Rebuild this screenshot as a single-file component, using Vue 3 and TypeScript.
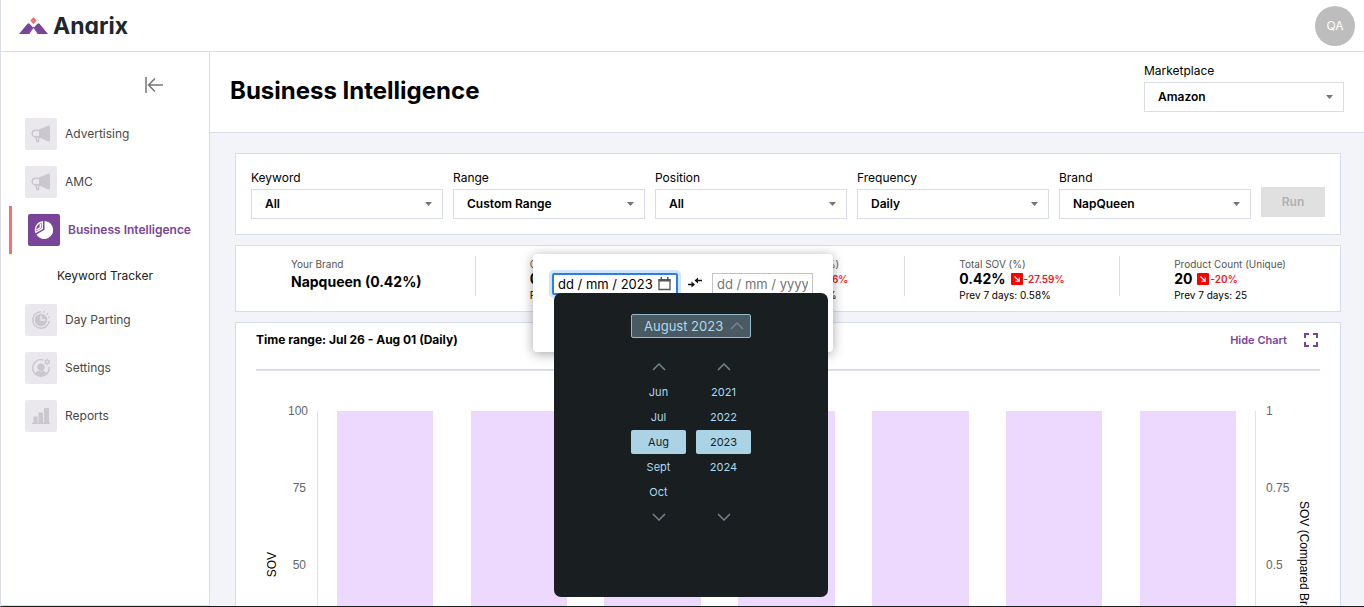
<script setup lang="ts">
import { ref } from 'vue'

interface NavItem {
  label: string
  icon: 'horn' | 'pie' | 'clock' | 'user' | 'bars'
  active?: boolean
  children?: string[]
}

interface Filter {
  id: string
  label: string
  value: string
}

interface Stat {
  label: string
  value: string
  change?: string
  prev?: string
}

const nav: NavItem[] = [
  { label: 'Advertising', icon: 'horn' },
  { label: 'AMC', icon: 'horn' },
  { label: 'Business Intelligence', icon: 'pie', active: true, children: ['Keyword Tracker'] },
  { label: 'Day Parting', icon: 'clock' },
  { label: 'Settings', icon: 'user' },
  { label: 'Reports', icon: 'bars' },
]

const filters: Filter[] = [
  { id: 'keyword', label: 'Keyword', value: 'All' },
  { id: 'range', label: 'Range', value: 'Custom Range' },
  { id: 'position', label: 'Position', value: 'All' },
  { id: 'frequency', label: 'Frequency', value: 'Daily' },
  { id: 'brand', label: 'Brand', value: 'NapQueen' },
]

const stats: Stat[] = [
  { label: 'Your Brand', value: 'Napqueen (0.42%)' },
  { label: 'Organic SOV (%)', value: '0.08%', change: '-20%', prev: 'Prev 7 days: 0.10%' },
  { label: 'Sponsored SOV (%)', value: '0.34%', change: '-29.16%', prev: 'Prev 7 days: 0.48%' },
  { label: 'Total SOV (%)', value: '0.42%', change: '-27.59%', prev: 'Prev 7 days: 0.58%' },
  { label: 'Product Count (Unique)', value: '20', change: '-20%', prev: 'Prev 7 days: 25' },
]

const leftTicks = ['100', '75', '50', '25', '0']
const rightTicks = ['1', '0.75', '0.5', '0.25', '0']
const bars = [100, 100, 100, 100, 100, 100, 100]

const months = ['Jun', 'Jul', 'Aug', 'Sept', 'Oct']
const years = ['2021', '2022', '2023', '2024']
const month = ref('Aug')
const year = ref('2023')
const startDate = ref('dd / mm / 2023')
const endDate = ref('')
</script>

<template>
  <div class="app">
    <header class="topbar">
      <a class="brand" href="#">
        <svg width="29" height="18" viewBox="0 0 29 18" aria-hidden="true">
          <path d="M0 17 8.500 6.800q1-1 2 0L14 10.500 8.800 17zM29 17 20.500 6.800q-1-1-2 0L15 10.500 20.200 17z" fill="#7a449b" />
          <path d="M8.500 17 14.500 9.500 20.500 17h-5L14.500 11.500 13.500 17z" fill="#7a449b" />
          <path d="M10.300 17 14.500 11 18.700 17z" fill="#fff" />
          <path d="m14.500 0 3.200 3.600-3.200 3.600-3.200-3.600z" fill="#f46f76" />
        </svg>
        <span class="brand-name">Anarix</span>
      </a>
      <button class="avatar" type="button">QA</button>
    </header>

    <div class="body">
      <aside class="sidebar">
        <button class="collapse" type="button" aria-label="Collapse menu">
          <svg width="18" height="18" viewBox="0 0 18 18" fill="none" stroke="#757575" stroke-width="1.500">
            <path d="M1 1v16M18 9H4M10 2.500 3.500 9l6.500 6.500" />
          </svg>
        </button>
        <nav>
          <template v-for="item in nav" :key="item.label">
            <a class="nav-item" :class="{ active: item.active }" href="#">
              <span class="nav-icon">
                <svg v-if="item.icon === 'horn'" width="20" height="18" viewBox="0 0 20 18">
                  <path d="M8 4.500 17.500.5Q19 0 19 1.800v13.400q0 1.800-1.500 1.300L8 12.500z" fill="#cbc7cf" />
                  <path d="M8.500 5.200H4.500a3.300 3.300 0 0 0 0 6.600h4M4.800 12l.8 4q1.200 1.300 2 0v-4" fill="none" stroke="#cbc7cf" stroke-width="1.500" />
                </svg>
                <svg v-else-if="item.icon === 'pie'" width="20" height="20" viewBox="0 0 20 20">
                  <path d="M10.500 1A9 9 0 1 1 2.400 14.600L10.500 9.800z" fill="#fff" />
                  <path d="M8.300 1.900v6.700L1.900 12.300A8 8 0 0 1 8.300 1.900zM6.300 3.500v4.200L2.500 10" fill="none" stroke="#fff" stroke-width="1.400" />
                </svg>
                <svg v-else-if="item.icon === 'clock'" width="20" height="20" viewBox="0 0 20 20">
                  <circle cx="10" cy="10" r="6.300" fill="#cbc7cf" />
                  <path d="M10 5.500V10h4.500" fill="none" stroke="#ebe8ed" stroke-width="1.500" />
                  <path d="M10 1.700A8.300 8.300 0 1 0 18.300 11" fill="none" stroke="#cbc7cf" stroke-width="1.500" />
                  <path d="M12.200 1.900h1.500M15.600 4h1.500M17.300 7.200h1.500" stroke="#cbc7cf" stroke-width="1.600" />
                </svg>
                <svg v-else-if="item.icon === 'user'" width="20" height="20" viewBox="0 0 20 20">
                  <circle cx="10" cy="9.200" r="3.700" fill="#cbc7cf" />
                  <path d="M4 15.500q1.500-3 4-2.500 2 .8 4 0 2.500-.5 4 2.500a8 8 0 0 1-12 0z" fill="#cbc7cf" />
                  <path d="M12 1.900A8.300 8.300 0 1 0 18.200 9" fill="none" stroke="#cbc7cf" stroke-width="1.500" />
                  <circle cx="16.200" cy="3.800" r="1.700" fill="none" stroke="#cbc7cf" stroke-width="1.400" />
                  <path d="M16.200.8v1.400M16.200 5.400v1.400M13.600 2.300l1.200.7M17.600 4.600l1.200.7M13.600 5.300l1.200-.7M17.600 3l1.200-.7" stroke="#cbc7cf" stroke-width="1.400" />
                </svg>
                <svg v-else width="20" height="18" viewBox="0 0 20 18" fill="#cbc7cf">
                  <path d="M1 15.500h18V17H1zM2.500 9.500h4v6h-4zM7.500 5.500h4.500v10H7.500zM13 1h5v14.500h-5z" />
                </svg>
              </span>
              {{ item.label }}
            </a>
            <a v-for="child in item.children" :key="child" class="nav-child" href="#">{{ child }}</a>
          </template>
        </nav>
      </aside>

      <main class="main">
        <div class="page-head">
          <h1>Business Intelligence</h1>
          <div class="field marketplace">
            <label for="marketplace">Marketplace</label>
            <div class="select">
              <select id="marketplace">
                <option>Amazon</option>
              </select>
              <svg width="7" height="4" viewBox="0 0 7 4"><path d="M0 0h7L3.500 4z" fill="#757575" /></svg>
            </div>
          </div>
        </div>

        <div class="content">
          <form class="card filters" @submit.prevent>
            <div v-for="f in filters" :key="f.id" class="field">
              <label :for="f.id">{{ f.label }}</label>
              <div class="select">
                <select :id="f.id">
                  <option>{{ f.value }}</option>
                </select>
                <svg width="7" height="4" viewBox="0 0 7 4"><path d="M0 0h7L3.500 4z" fill="#757575" /></svg>
              </div>

              <div v-if="f.id === 'range'" class="popup">
                <div class="dates">
                  <div class="date focused">
                    <input v-model="startDate" type="text" aria-label="Start date" />
                    <button type="button" aria-label="Open calendar">
                      <svg width="13" height="14" viewBox="0 0 13 14">
                        <path d="M1 3h11v9.500H1z" fill="none" stroke="#555" stroke-width="1.300" />
                        <path d="M.5 2h12v2.500H.5zM2.500 0H4v3H2.500zM9 0h1.500v3H9z" fill="#555" />
                      </svg>
                    </button>
                  </div>
                  <svg class="swap" width="14" height="16" viewBox="0 0 14 16">
                    <path d="M0 8.500h4M9.500 4.500H14" stroke="#111" stroke-width="1.400" />
                    <path d="m3.500 5.500 3.500 3-3.500 3zM10 1.500 6.500 4.500l3.500 3z" fill="#111" />
                  </svg>
                  <div class="date">
                    <input v-model="endDate" type="text" placeholder="dd / mm / yyyy" aria-label="End date" />
                  </div>
                </div>

                <div class="calendar">
                  <button class="cal-head" type="button">
                    August 2023
                    <svg width="14" height="8" viewBox="0 0 14 8"><path d="m1 7 6-6 6 6" /></svg>
                  </button>
                  <div class="cal-cols">
                    <div class="cal-col">
                      <button type="button" aria-label="Previous months">
                        <svg width="14" height="8" viewBox="0 0 14 8"><path d="m1 7 6-6 6 6" /></svg>
                      </button>
                      <button v-for="m in months" :key="m" type="button" :class="{ picked: m === month }" @click="month = m">{{ m }}</button>
                      <button type="button" aria-label="Next months">
                        <svg width="14" height="8" viewBox="0 0 14 8"><path d="m1 1 6 6 6-6" /></svg>
                      </button>
                    </div>
                    <div class="cal-col">
                      <button type="button" aria-label="Previous years">
                        <svg width="14" height="8" viewBox="0 0 14 8"><path d="m1 7 6-6 6 6" /></svg>
                      </button>
                      <button v-for="y in years" :key="y" type="button" :class="{ picked: y === year }" @click="year = y">{{ y }}</button>
                      <button class="last" type="button" aria-label="Next years">
                        <svg width="14" height="8" viewBox="0 0 14 8"><path d="m1 1 6 6 6-6" /></svg>
                      </button>
                    </div>
                  </div>
                </div>
              </div>
            </div>
            <button class="run" type="submit" disabled>Run</button>
          </form>

          <section class="card stats">
            <div v-for="s in stats" :key="s.label" class="stat">
              <div class="stat-label">{{ s.label }}</div>
              <div class="stat-value" :class="{ solo: !s.prev }">
                {{ s.value }}
                <span v-if="s.change" class="change">
                  <svg width="12" height="12" viewBox="0 0 12 12">
                    <rect width="12" height="12" rx="1" fill="#f00" />
                    <path d="m3.500 3.500 4.500 4.500M8.300 4.500v3.800H4.500" fill="none" stroke="#fff" stroke-width="1.100" />
                  </svg>
                  {{ s.change }}
                </span>
              </div>
              <div v-if="s.prev" class="stat-prev">{{ s.prev }}</div>
            </div>
          </section>

          <section class="card chart-card">
            <div class="chart-head">
              <h2>Time range: Jul 26 - Aug 01 (Daily)</h2>
              <button class="hide" type="button">Hide Chart</button>
              <button class="full" type="button" aria-label="Full screen">
                <svg width="14" height="14" viewBox="0 0 14 14" fill="none" stroke="#7a449b" stroke-width="2">
                  <path d="M1 5V1h4M9 1h4v4M13 9v4H9M5 13H1V9" />
                </svg>
              </button>
            </div>
            <div class="chart">
              <div class="axis-title"><span class="up">SOV</span></div>
              <div class="ticks left"><span v-for="t in leftTicks" :key="t">{{ t }}</span></div>
              <div class="plot">
                <div v-for="(b, i) in bars" :key="i" class="bar" :style="{ height: b + '%' }"></div>
              </div>
              <div class="ticks right"><span v-for="t in rightTicks" :key="t">{{ t }}</span></div>
              <div class="axis-title"><span>SOV (Compared Brand)</span></div>
            </div>
          </section>
        </div>
      </main>
    </div>
  </div>
</template>

<style>
body {
  margin: 0;
  overflow: hidden;
}
</style>

<style scoped>
* {
  box-sizing: border-box;
}

.app {
  display: flex;
  flex-direction: column;
  height: 100vh;
  overflow: hidden;
  border-left: 1px solid #d9dcea;
  border-bottom: 1px solid #191e21;
  background: #fff;
  color: #000;
  font-family: Inter, "Liberation Sans", sans-serif;
  font-size: 12px;
  line-height: 18px;
}

button,
input,
select {
  margin: 0;
  padding: 0;
  border: 0;
  background: none;
  color: inherit;
  font: inherit;
}

a {
  color: inherit;
  text-decoration: none;
}

svg {
  display: block;
  flex: none;
}

h1,
h2 {
  margin: 0;
}

.topbar {
  display: flex;
  flex: none;
  align-items: center;
  justify-content: space-between;
  height: 52px;
  padding: 0 9px 0 18px;
  border-bottom: 1px solid #d9dcea;
}

.brand {
  display: flex;
  align-items: center;
  gap: 5px;
}

.brand-name {
  color: #1d272e;
  font-size: 23px;
  font-weight: 700;
  line-height: 24px;
  font-feature-settings: "cv11";
}

.avatar {
  width: 40px;
  height: 40px;
  border-radius: 50%;
  background: #bdbdbd;
  color: #fff;
}

.body {
  display: flex;
  flex: 1;
  min-height: 0;
}

.sidebar {
  flex: none;
  width: 209px;
  border-right: 1px solid #d9dcea;
  border-bottom: 1px solid #d9dcea;
}

.collapse {
  display: block;
  margin: 24px 46px 16px auto;
}

.nav-item {
  display: flex;
  align-items: center;
  gap: 8px;
  height: 48px;
  margin-left: 8px;
  padding-left: 16px;
  color: #484848;
  line-height: 20px;
}

.nav-icon {
  display: grid;
  place-items: center;
  width: 32px;
  height: 32px;
  border-radius: 2px;
  background: #ebe8ed;
}

.nav-item.active {
  border-left: 3px solid #f46f76;
  color: #7a449b;
  font-weight: 600;
}

.active .nav-icon {
  background: #7a449b;
}

.nav-child {
  display: block;
  padding: 13px 0 11px 56px;
  color: #222;
}

.main {
  display: flex;
  flex: 1;
  flex-direction: column;
  min-width: 0;
  background: #f3f4fa;
}

.page-head {
  display: flex;
  flex: none;
  align-items: flex-start;
  justify-content: space-between;
  height: 81px;
  padding: 10px 20px 0;
  border-bottom: 1px solid #d9dcea;
  background: #fff;
}

h1 {
  padding-top: 14px;
  font-size: 24px;
  font-weight: 700;
  line-height: 30px;
}

.field {
  position: relative;
  display: flex;
  flex: 1;
  flex-direction: column;
  gap: 2px;
  min-width: 0;
}

.marketplace {
  flex: none;
  width: 200px;
}

.select {
  display: grid;
  align-items: center;
}

.select select {
  grid-area: 1 / 1;
  width: 100%;
  height: 30px;
  padding: 0 32px 0 13px;
  border: 1px solid #d9dcea;
  border-radius: 0;
  appearance: none;
  background: #fff;
  font-weight: 600;
}

.select svg {
  grid-area: 1 / 1;
  justify-self: end;
  margin-right: 11px;
  pointer-events: none;
}

.content {
  display: flex;
  flex: 1;
  flex-direction: column;
  gap: 10px;
  min-height: 0;
  padding: 20px 23px 0 25px;
}

.card {
  flex: none;
  border: 1px solid #d9dcea;
  background: #fff;
}

.filters {
  display: flex;
  align-items: flex-end;
  gap: 10px;
  padding: 15px;
}

.run {
  width: 64px;
  height: 30px;
  margin-bottom: 2px;
  background: #e0e0e0;
  color: #b0b0b0;
  font-weight: 600;
}

.stats {
  display: grid;
  grid-template-columns: 10fr 9fr 9fr 9fr 9fr;
  height: 67px;
  padding: 10px 5px 0 1px;
}

.stat {
  height: 40px;
  padding-left: 54px;
  border-right: 1px solid #d9dcea;
  white-space: nowrap;
}

.stat:last-child {
  border-right: 0;
}

.stat-label {
  padding-top: 1px;
  color: #555;
  font-size: 10px;
  line-height: 14px;
}

.stat-value {
  display: flex;
  align-items: center;
  gap: 5px;
  font-size: 14px;
  font-weight: 700;
  line-height: 16px;
}

.stat-value.solo {
  line-height: 22px;
}

.change {
  display: flex;
  align-items: center;
  gap: 1px;
  color: #f5121d;
  font-size: 10px;
  font-weight: 600;
}

.stat-prev {
  font-size: 10px;
  line-height: 16px;
}

.chart-card {
  padding: 0 20px 60px;
}

.chart-head {
  display: flex;
  align-items: center;
  height: 48px;
  padding: 0 2px 12px 0;
  border-bottom: 2px solid #d9dcea;
}

h2 {
  flex: 1;
  font-size: 12px;
  font-weight: 700;
}

.hide {
  margin-right: 17px;
  color: #7a449b;
  font-size: 11px;
  font-weight: 600;
}

.chart {
  display: grid;
  grid-template-columns: 32px 29px 1fr 32px 32px;
  height: 355px;
  padding-top: 33px;
  font-family: "Liberation Sans", Arial, sans-serif;
  line-height: 14px;
}

.axis-title {
  display: grid;
  place-items: center;
  margin: 7px 0;
  white-space: nowrap;
}

.axis-title span {
  writing-mode: vertical-rl;
}

.axis-title .up {
  transform: rotate(180deg);
}

.ticks {
  display: flex;
  flex-direction: column;
  justify-content: space-between;
  color: #666;
}

.left {
  padding-right: 11px;
  text-align: right;
}

.right {
  padding-left: 10px;
}

.plot {
  display: grid;
  grid-template-columns: repeat(7, 1fr);
  align-items: end;
  justify-items: center;
  margin: 7px 0;
  border: solid #e2e2e2;
  border-width: 0 1px;
}

.bar {
  width: 72%;
  background: #eed9fe;
}

.popup {
  position: absolute;
  top: 85px;
  left: 80px;
  z-index: 2;
  width: 300px;
  height: 98px;
  padding: 19px;
  border-radius: 4px;
  background: #fff;
  box-shadow: 0 2px 12px rgba(0, 0, 0, 0.35);
}

.dates {
  display: flex;
  align-items: center;
  gap: 10px;
  font-size: 13px;
}

.date {
  display: flex;
  align-items: center;
  width: 101px;
  height: 22px;
  padding: 0 4px;
  border: 1px solid #c4c4cc;
}

.date.focused {
  width: 126px;
  border: 2px solid #2f7de1;
  border-radius: 2px;
  padding: 0 5px 0 4px;
  box-shadow: 0 0 0 3px #cfe6ff;
}

.date input {
  flex: 1;
  width: 0;
  min-width: 0;
  outline: 0;
}

.date input::placeholder {
  color: #757575;
  opacity: 1;
}

.calendar {
  position: absolute;
  top: 39px;
  left: 21px;
  display: flex;
  flex-direction: column;
  align-items: center;
  width: 274px;
  height: 304px;
  padding-top: 21px;
  border-radius: 7px;
  background: #191e21;
  color: #b0d8eb;
}

.calendar path {
  fill: none;
  stroke: #71858f;
  stroke-width: 1.5;
}

.cal-head {
  display: flex;
  align-items: center;
  justify-content: space-between;
  width: 120px;
  height: 24px;
  padding: 0 6px 0 12px;
  border: 1px solid #94b9c9;
  border-radius: 2px;
  background: #4a5a62;
  font-size: 13px;
}

.cal-cols {
  display: flex;
  gap: 10px;
  padding-top: 17px;
}

.cal-col {
  display: grid;
  grid-template-rows: repeat(7, 24px);
  gap: 1px;
  width: 55px;
  font-size: 11px;
}

.cal-col button {
  display: grid;
  place-items: center;
  border-radius: 2px;
}

.cal-col .last {
  grid-row: 7;
}

.cal-col .picked {
  background: #abd3e6;
  color: #191e21;
}
</style>
